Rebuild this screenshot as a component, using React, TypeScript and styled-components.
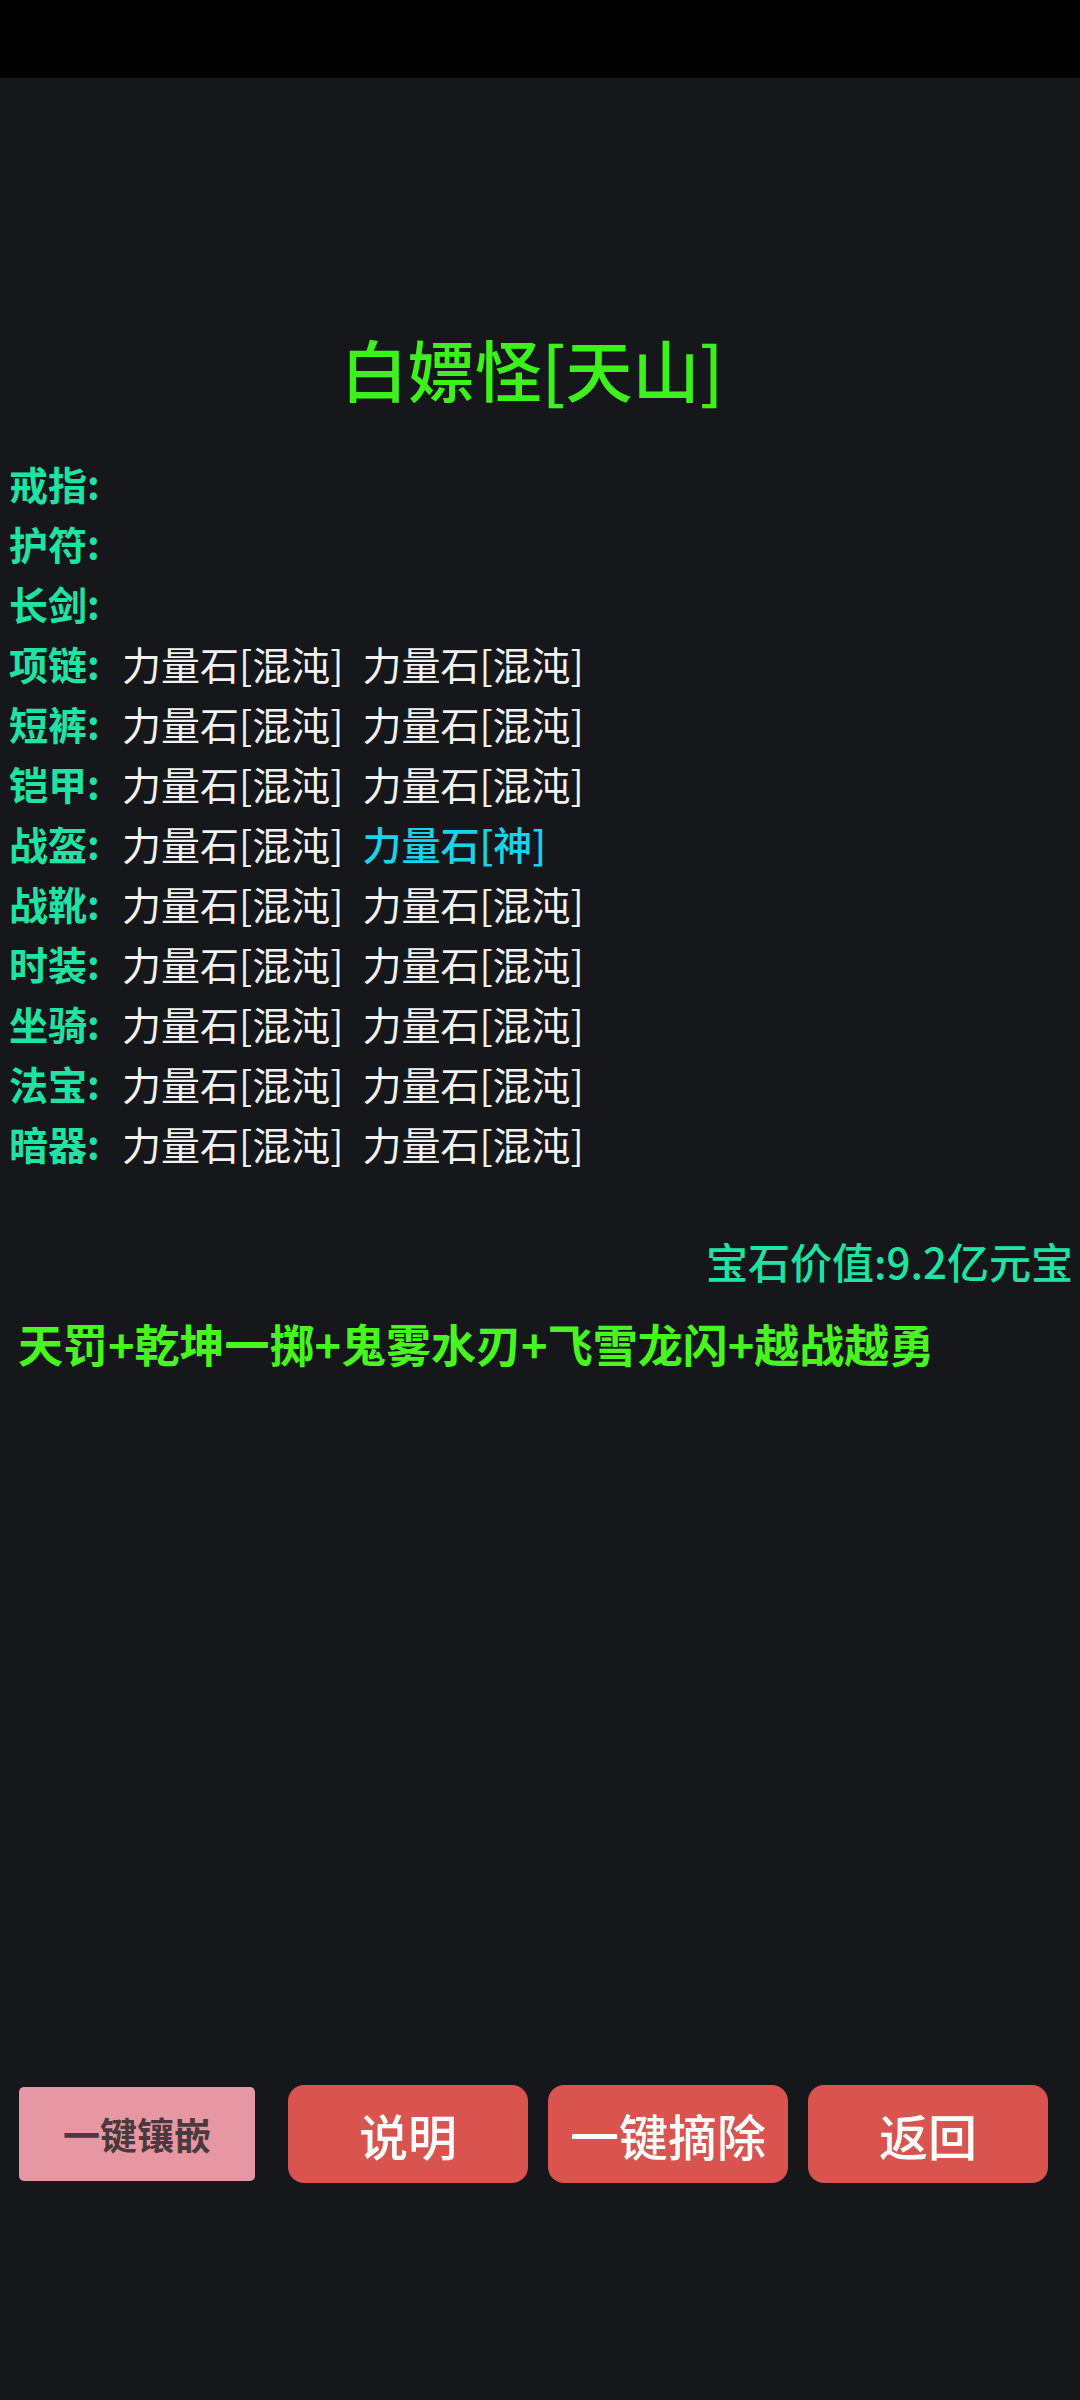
import React from "react";
import styled, { createGlobalStyle } from "styled-components";

const Global = createGlobalStyle`
  html, body { margin: 0; padding: 0; background: #16171b; }
  body { font-family: "Noto Sans CJK SC", "Noto Sans", sans-serif; }
`;

const Page = styled.div`
  width: 1080px;
  height: 2400px;
  display: flex;
  flex-direction: column;
  background: #16171b;
  overflow: hidden;
`;

const StatusBar = styled.div`
  height: 78px;
  background: #000;
  flex-shrink: 0;
`;

const Title = styled.h1`
  margin: 240px 0 0;
  padding-right: 16px;
  height: 100px;
  line-height: 100px;
  text-align: center;
  font-size: 67px;
  font-weight: 500;
  color: #3df21c;
`;

const GearList = styled.div`
  margin-top: 35px;
  display: flex;
  flex-direction: column;
  padding-left: 9px;
`;

const Row = styled.div`
  height: 60px;
  display: flex;
  align-items: center;
  font-size: 39px;
  white-space: nowrap;
`;

const Label = styled.span`
  color: #1fe3a2;
  font-weight: 700;
  width: 113px;
  flex-shrink: 0;
`;

const Gem = styled.span<{ $god?: boolean }>`
  color: ${(p) => (p.$god ? "#19d3ea" : "#f2f2f2")};
  font-weight: ${(p) => (p.$god ? 500 : 400)};
  margin-right: 19px;
`;

const Value = styled.div`
  margin-top: 58px;
  height: 60px;
  line-height: 60px;
  text-align: right;
  padding-right: 7px;
  font-size: 42px;
  font-weight: 500;
  color: #1fe3a2;
`;

const Skills = styled.div`
  margin-top: 23px;
  height: 60px;
  line-height: 60px;
  padding-left: 18px;
  font-size: 45px;
  font-weight: 700;
  color: #47f51f;
  white-space: nowrap;
`;

const ButtonBar = styled.div`
  margin-top: auto;
  padding: 0 0 217px 19px;
  display: flex;
  align-items: center;
  gap: 20px;
`;

const Button = styled.button<{ $disabled?: boolean }>`
  border: none;
  padding: 0;
  font-family: "Noto Sans CJK SC", sans-serif;
  display: flex;
  align-items: center;
  justify-content: center;
  ${(p) =>
    p.$disabled
      ? `
    width: 236px;
    height: 94px;
    margin-right: 13px;
    background: #e797a4;
    color: #4a3a3d;
    border-radius: 5px;
    font-size: 37px;
    font-weight: 700;
  `
      : `
    width: 240px;
    height: 98px;
    background: #d9544f;
    color: #ffffff;
    border-radius: 16px;
    font-size: 49px;
    font-weight: 500;
  `}
`;

const GEM = "力量石[混沌]";

const gear: { name: string; gems: { text: string; god?: boolean }[] }[] = [
  { name: "戒指", gems: [] },
  { name: "护符", gems: [] },
  { name: "长剑", gems: [] },
  { name: "项链", gems: [{ text: GEM }, { text: GEM }] },
  { name: "短裤", gems: [{ text: GEM }, { text: GEM }] },
  { name: "铠甲", gems: [{ text: GEM }, { text: GEM }] },
  { name: "战盔", gems: [{ text: GEM }, { text: "力量石[神]", god: true }] },
  { name: "战靴", gems: [{ text: GEM }, { text: GEM }] },
  { name: "时装", gems: [{ text: GEM }, { text: GEM }] },
  { name: "坐骑", gems: [{ text: GEM }, { text: GEM }] },
  { name: "法宝", gems: [{ text: GEM }, { text: GEM }] },
  { name: "暗器", gems: [{ text: GEM }, { text: GEM }] },
];

export default function App() {
  return (
    <>
      <Global />
      <Page>
        <StatusBar />
        <Title>白嫖怪[天山]</Title>
        <GearList>
          {gear.map((g) => (
            <Row key={g.name}>
              <Label>{g.name}:</Label>
              {g.gems.map((gem, i) => (
                <Gem key={i} $god={gem.god}>
                  {gem.text}
                </Gem>
              ))}
            </Row>
          ))}
        </GearList>
        <Value>宝石价值:9.2亿元宝</Value>
        <Skills>天罚+乾坤一掷+鬼雾水刃+飞雪龙闪+越战越勇</Skills>
        <ButtonBar>
          <Button $disabled>一键镶嵌</Button>
          <Button>说明</Button>
          <Button>一键摘除</Button>
          <Button>返回</Button>
        </ButtonBar>
      </Page>
    </>
  );
}
